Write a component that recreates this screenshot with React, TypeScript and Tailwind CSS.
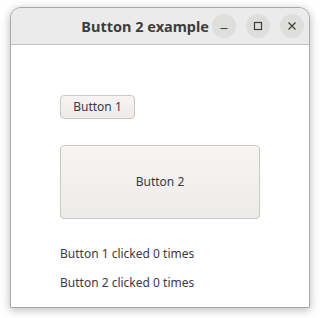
import React, { useState } from 'react'

const font = { fontFamily: '"Noto Sans", "DejaVu Sans", sans-serif' }

function HeaderButton({ children }: { children: React.ReactNode }) {
  return (
    <button className="flex h-[24px] w-[24px] items-center justify-center rounded-full bg-[#dededd] text-[#3d3d3d]">
      {children}
    </button>
  )
}

export default function App() {
  const [c1, setC1] = useState(0)
  const [c2, setC2] = useState(0)

  return (
    <div className="h-[318px] w-[320px] overflow-hidden bg-white pl-[10px] pt-[7px]" style={font}>
      <div className="flex h-[301px] w-[300px] flex-col overflow-hidden rounded-t-[11px] border border-[#a9a9a9] bg-white shadow-[0_2px_10px_rgba(0,0,0,0.28)]">
        {/* title bar */}
        <div className="flex h-[37px] shrink-0 items-center justify-end border-b border-[#c0c0c0] bg-[#ebebeb] pr-[5px]">
          <div className="mr-[3px] whitespace-nowrap text-[14.5px] font-bold leading-none text-[#3d3d3d]">Button 2 example</div>
          <div className="flex items-center gap-[10px]">
            <HeaderButton>
              <svg width="10" height="10" viewBox="0 0 10 10">
                <path d="M1.5 7.5h7" stroke="currentColor" strokeWidth="1.2" />
              </svg>
            </HeaderButton>
            <HeaderButton>
              <svg width="10" height="10" viewBox="0 0 10 10">
                <rect x="1.5" y="1.5" width="7" height="7" fill="none" stroke="currentColor" strokeWidth="1.2" />
              </svg>
            </HeaderButton>
            <HeaderButton>
              <svg width="10" height="10" viewBox="0 0 10 10">
                <path d="M1.5 1.5l7 7M8.5 1.5l-7 7" stroke="currentColor" strokeWidth="1.2" />
              </svg>
            </HeaderButton>
          </div>
        </div>

        {/* content */}
        <div className="flex flex-col items-start pl-[49px] pt-[50px] text-[12px] text-[#3d3846]">
          <button
            onClick={() => setC1(c1 + 1)}
            className="h-[24px] w-[75px] rounded-[4px] border border-[#cdc7c2] bg-gradient-to-b from-[#f6f5f4] to-[#edebe9] leading-none"
          >
            Button 1
          </button>
          <button
            onClick={() => setC2(c2 + 1)}
            className="mt-[26px] h-[74px] w-[200px] rounded-[4px] border border-[#cdc7c2] bg-gradient-to-b from-[#f6f5f4] to-[#edebe9] leading-none"
          >
            Button 2
          </button>
          <div className="mt-[26px] leading-[18px]">Button 1 clicked {c1} times</div>
          <div className="mt-[11px] leading-[18px]">Button 2 clicked {c2} times</div>
        </div>
      </div>
    </div>
  )
}
